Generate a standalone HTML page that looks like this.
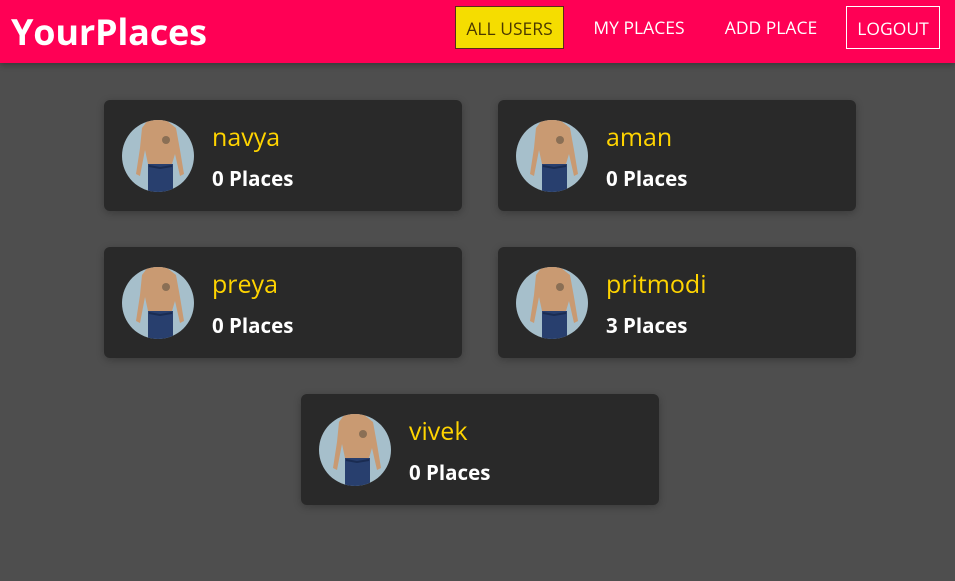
<!DOCTYPE html>
<html><head><meta charset="utf-8"><style>
*{margin:0;padding:0;box-sizing:border-box}
body{width:955px;height:581px;background:#4e4e4e;font-family:"Open Sans","Liberation Sans",sans-serif;position:relative;overflow:hidden}
.hdr{position:absolute;left:0;top:0;width:955px;height:63px;background:#ff0055;box-shadow:0 2px 6px rgba(0,0,0,.3)}
.logo{position:absolute;left:11px;top:7px;font-size:36px;font-weight:bold;color:#fff;letter-spacing:-0.2px}
.nav{position:absolute;top:6px;height:43px;line-height:44px;font-size:17.5px;color:#fff;text-align:center}
.card{position:absolute;width:358px;height:111px;background:#292929;border-radius:6px;box-shadow:0 2px 8px rgba(0,0,0,.25)}
.card svg{position:absolute;left:18px;top:20px}
.nm{position:absolute;left:108px;top:20px;font-size:25px;color:#ffd400}
.pl{position:absolute;left:108px;top:65px;font-size:20.5px;font-weight:bold;color:#fff}
</style></head><body>
<div class="hdr">
<div class="logo">YourPlaces</div>
<div class="nav" style="left:455px;width:109px;background:#f5dd00;border:1px solid #5a2a1a;color:#4a3800">ALL USERS</div>
<div class="nav" style="left:584px;width:110px">MY PLACES</div>
<div class="nav" style="left:716px;width:110px">ADD PLACE</div>
<div class="nav" style="left:846px;width:94px;border:1px solid #fff">LOGOUT</div>
</div>
<svg width="0" height="0" style="position:absolute"><defs>
<clipPath id="c"><circle cx="36" cy="36" r="36"/></clipPath>
<g id="av"><g clip-path="url(#c)"><rect width="72" height="72" fill="#a6bfcb"/>
<path d="M26 0 L44 0 L54 8 L58 30 L62 54 L58 56 L53 34 L50 44 L26 44 L23 30 L18 56 L14 54 L18 28 L20 8 Z" fill="#c99a72"/>
<rect x="26" y="44" width="25" height="28" fill="#283f6e"/>
<path d="M27 46 L38 48 L50 46" stroke="#1a2c52" stroke-width="2" fill="none"/>
<circle cx="44" cy="20" r="4" fill="#8a6f55"/></g></g></defs></svg>
<div class="card" style="left:104px;top:100px"><svg width="72" height="72"><use href="#av"/></svg><div class="nm">navya</div><div class="pl">0 Places</div></div>
<div class="card" style="left:498px;top:100px"><svg width="72" height="72"><use href="#av"/></svg><div class="nm">aman</div><div class="pl">0 Places</div></div>
<div class="card" style="left:104px;top:247px"><svg width="72" height="72"><use href="#av"/></svg><div class="nm">preya</div><div class="pl">0 Places</div></div>
<div class="card" style="left:498px;top:247px"><svg width="72" height="72"><use href="#av"/></svg><div class="nm">pritmodi</div><div class="pl">3 Places</div></div>
<div class="card" style="left:301px;top:394px"><svg width="72" height="72"><use href="#av"/></svg><div class="nm">vivek</div><div class="pl">0 Places</div></div>
</body></html>
